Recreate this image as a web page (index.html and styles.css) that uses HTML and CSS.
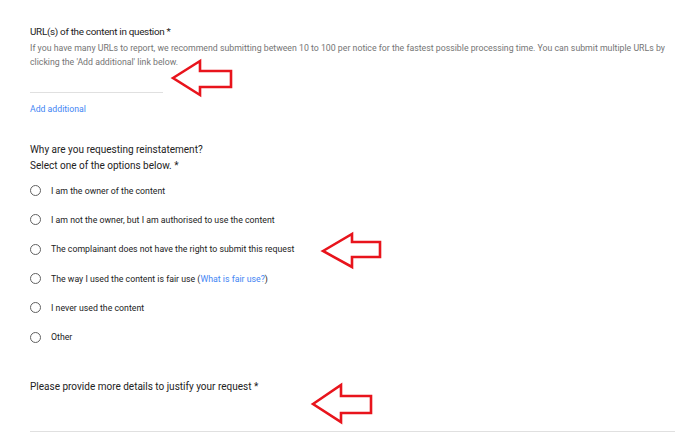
FILE: index.html
```html
<!DOCTYPE html>
<html>
<head>
<meta charset="utf-8">
<link rel="stylesheet" href="styles.css">
</head>
<body>
<div class="page">
  <section class="field">
    <div class="q-title url-title">URL(s) of the content in question *</div>
    <div class="q-desc">If you have many URLs to report, we recommend submitting between 10 to 100 per notice for the fastest possible processing time. You can submit multiple URLs by clicking the 'Add additional' link below.</div>
    <div class="url-input"></div>
    <a class="link add-link">Add additional</a>
  </section>

  <section class="field reasons">
    <div class="q-title">Why are you requesting reinstatement?</div>
    <div class="q-title">Select one of the options below. *</div>
    <ul class="options">
      <li class="option"><span class="radio"></span><span class="opt-text">I am the owner of the content</span></li>
      <li class="option"><span class="radio"></span><span class="opt-text">I am not the owner, but I am authorised to use the content</span></li>
      <li class="option"><span class="radio"></span><span class="opt-text">The complainant does not have the right to submit this request</span></li>
      <li class="option"><span class="radio"></span><span class="opt-text">The way I used the content is fair use (<a class="link">What is fair use?</a>)</span></li>
      <li class="option"><span class="radio"></span><span class="opt-text">I never used the content</span></li>
      <li class="option"><span class="radio"></span><span class="opt-text">Other</span></li>
    </ul>
  </section>

  <section class="field details">
    <div class="q-title">Please provide more details to justify your request *</div>
    <div class="details-input"></div>
  </section>
</div>

<svg class="arrows" width="700" height="443" viewBox="0 0 700 443">
  <polygon points="173,78 200,61 200,71 231,71 231,87 200,87 200,95" />
  <polygon points="323,251 352,234 352,242 380,242 380,257 352,257 352,267" />
  <polygon points="313,404 341,385 341,396 371,396 371,413 341,413 341,422" />
</svg>
</body>
</html>
```

FILE: styles.css
```css
html, body {
  margin: 0;
  padding: 0;
  background: #ffffff;
}

body {
  font-family: Roboto, "Liberation Sans", Arial, sans-serif;
  color: #202124;
  width: 700px;
  height: 443px;
  overflow: hidden;
  position: relative;
}

.page {
  padding: 25px 25px 0 30px;
}

.q-title {
  font-size: 10px;
  line-height: 16px;
  color: #222222;
}

.url-title {
  font-size: 9.9px;
  letter-spacing: -0.3px;
  line-height: 14px;
}

.q-desc {
  margin-top: 2px;
  font-size: 8.75px;
  line-height: 14px;
  color: #757575;
  max-width: 645px;
}

.url-input {
  width: 133px;
  height: 23px;
  border-bottom: 1px solid #e0e0e0;
}

.link {
  color: #4285f4;
  text-decoration: none;
}

.add-link {
  display: block;
  margin-top: 9px;
  font-size: 8.7px;
  line-height: 14px;
}

.reasons {
  margin-top: 26px;
}

.options {
  list-style: none;
  margin: 2px 0 0;
  padding: 0;
}

.option {
  display: flex;
  align-items: center;
  height: 29.33px;
  gap: 10px;
}

.radio {
  box-sizing: border-box;
  width: 11px;
  height: 11px;
  border: 1.5px solid #616161;
  border-radius: 50%;
  flex: none;
}

.opt-text {
  font-size: 8.75px;
  color: #222222;
}

.details {
  margin-top: 27px;
}

.details-input {
  width: 645px;
  height: 36px;
  border-bottom: 1px solid #e0e0e0;
}

.arrows {
  position: absolute;
  left: 0;
  top: 0;
  pointer-events: none;
}

.arrows polygon {
  fill: none;
  stroke: #e8141c;
  stroke-width: 2.6;
  stroke-linejoin: miter;
}
```
